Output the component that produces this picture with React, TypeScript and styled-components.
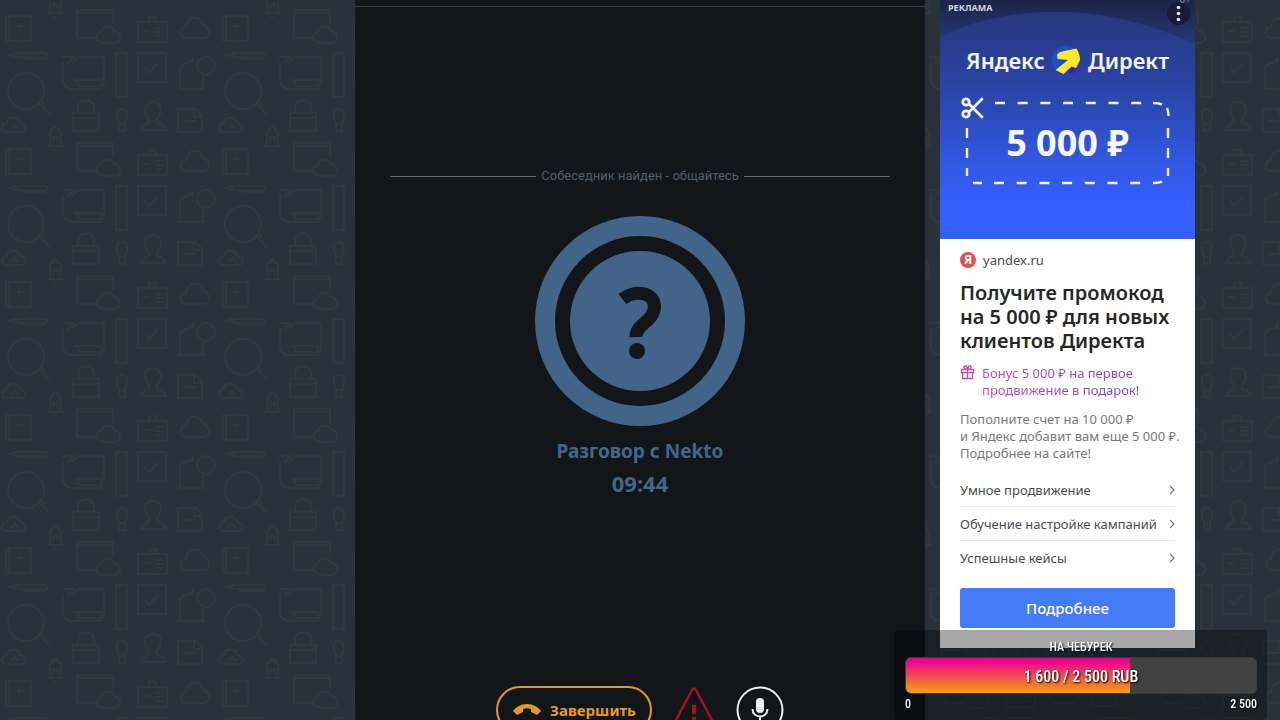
import React from "react";
import styled, { createGlobalStyle } from "styled-components";

const GlobalStyle = createGlobalStyle`
  *, *::before, *::after { box-sizing: border-box; }
  body {
    margin: 0;
    background: #29323b;
    font-family: "Noto Sans", "Open Sans", sans-serif;
  }
  h2, p, ul { margin: 0; padding: 0; }
  button { font: inherit; cursor: pointer; }
`;

const Page = styled.div`
  position: relative;
  display: grid;
  grid-template-columns: minmax(0, 1fr) minmax(0, 570px) minmax(0, 1fr);
  height: 100vh;
  overflow: hidden;
`;

const Wallpaper = styled.svg`
  position: absolute;
  inset: 0;
  width: 100%;
  height: 100%;
`;

const ChatPanel = styled.main`
  position: relative;
  grid-column: 2;
  display: flex;
  flex-direction: column;
  background: #121619;
`;

const PanelTop = styled.div`
  height: 7px;
  flex: none;
  border-bottom: 1px solid #3a4145;
`;

const Conversation = styled.section`
  display: flex;
  flex-direction: column;
  align-items: center;
  flex: none;
  height: 679px;
  padding: 158px 35px 0;
`;

const StatusLine = styled.div`
  display: flex;
  align-items: center;
  gap: 5px;
  align-self: stretch;
  color: #4f5d67;
  font-family: Roboto, "Noto Sans", sans-serif;
  font-size: 13px;
  line-height: 22px;
  white-space: nowrap;

  &::before,
  &::after {
    content: "";
    flex: 1;
    height: 1px;
    background: #65696c;
  }
`;

const Avatar = styled.svg`
  display: block;
  width: 210px;
  height: 210px;
  margin-top: 29px;
`;

const CallInfo = styled.div`
  margin-top: 9px;
  color: #43678c;
  font-weight: 700;
  line-height: 32px;
  text-align: center;
`;

const CallTitle = styled.div`
  font-size: 19px;
`;

const CallTimer = styled.div`
  font-size: 22px;
`;

const Controls = styled.div`
  display: flex;
  align-items: flex-start;
  justify-content: center;
  gap: 20px;
  flex: none;
`;

const EndButton = styled.button`
  display: flex;
  align-items: center;
  justify-content: center;
  gap: 8px;
  width: 156px;
  height: 48px;
  padding: 0;
  border: 2px solid #e39a26;
  border-radius: 24px;
  background: transparent;
  color: #e39a26;
  font-size: 15px;
  font-weight: 700;
`;

const IconButton = styled.button`
  display: flex;
  padding: 0;
  border: 0;
  background: transparent;
`;

const SideColumn = styled.aside`
  position: relative;
  grid-column: 3;
  padding-left: 15px;
`;

const AdCard = styled.article`
  width: 255px;
  height: 648px;
  background: #fff;
`;

const Cover = styled.div`
  position: relative;
  height: 239px;
  padding: 45px 26px 0;
  overflow: hidden;
  background: linear-gradient(#26377c 5%, #2b45a8 38%, #3156df 66%, #355ffb 85%);
  color: #f4f7ff;
`;

const CoverShade = styled.svg`
  position: absolute;
  inset: 0 0 auto;
  width: 100%;
  height: 80px;
`;

const AdLabel = styled.span`
  position: absolute;
  top: 2px;
  left: 8px;
  color: #cfd3e0;
  font-size: 9px;
  font-weight: 700;
  line-height: 12px;
`;

const AgeMark = styled.span`
  position: absolute;
  top: -8px;
  right: 4px;
  color: #8a8fa3;
  font-size: 10px;
  line-height: 14px;
`;

const MenuButton = styled.button`
  position: absolute;
  top: 2px;
  right: 5px;
  display: grid;
  place-items: center;
  width: 23px;
  height: 23px;
  padding: 0;
  border: 0;
  border-radius: 50%;
  background: #171d38;
`;

const Brand = styled.div`
  position: relative;
  display: flex;
  align-items: center;
  justify-content: space-between;
  font-size: 22px;
  font-weight: 600;
  line-height: 30px;
`;

const Coupon = styled.div`
  position: relative;
  display: grid;
  place-items: center;
  height: 84px;
  margin-top: 26px;
  font-size: 36px;
  font-weight: 700;
  line-height: 40px;
`;

const CouponOutline = styled.svg`
  position: absolute;
  top: -4px;
  left: -6px;
  width: 212px;
  height: 90px;
`;

const AdBody = styled.div`
  padding: 10px 20px 0;
  color: #4b4b4d;
  font-size: 13px;
`;

const Source = styled.a`
  display: flex;
  align-items: center;
  gap: 7px;
  color: #4b4b4d;
  line-height: 22px;
  text-decoration: none;
`;

const SourceMark = styled.span`
  display: grid;
  place-items: center;
  width: 16px;
  height: 16px;
  border-radius: 50%;
  background: #e0524f;
  color: #fff;
  font-size: 12px;
  font-weight: 700;
  line-height: 16px;
`;

const AdTitle = styled.h2`
  margin-top: 10px;
  color: #262628;
  font-size: 20px;
  font-weight: 600;
  line-height: 24px;
  white-space: nowrap;
`;

const Bonus = styled.div`
  display: flex;
  align-items: flex-start;
  gap: 7px;
  margin-top: 12px;
  line-height: 17px;
  white-space: nowrap;
`;

const BonusText = styled.p`
  background: linear-gradient(90deg, #cb45a4, #7a45d2);
  background-clip: text;
  color: transparent;
`;

const Description = styled.p`
  margin-top: 12px;
  color: #77777a;
  line-height: 17px;
  white-space: nowrap;
`;

const LinkList = styled.ul`
  margin-top: 11px;
  list-style: none;
`;

const LinkItem = styled.li`
  & + & {
    border-top: 1px solid #e9e9ea;
  }
`;

const SiteLink = styled.a`
  display: flex;
  align-items: center;
  justify-content: space-between;
  height: 33px;
  color: #4b4b4d;
  text-decoration: none;
  white-space: nowrap;
`;

const MoreButton = styled.button`
  width: 100%;
  height: 40px;
  margin-top: 14px;
  padding: 0;
  border: 0;
  border-radius: 3px;
  background: #437bf8;
  color: #fff;
  font-size: 15px;
  font-weight: 500;
`;

const Goal = styled.section`
  position: fixed;
  right: 13px;
  bottom: 0;
  width: 373px;
  height: 90px;
  padding: 7px 10px 0 11px;
  border-radius: 4px;
  background: rgba(0, 0, 0, 0.34);
  color: #fff;
  font-family: "Roboto Condensed", "Liberation Sans Narrow", Roboto, sans-serif;
  font-weight: 500;
  text-shadow: 1px 1px 2px #000;
`;

const GoalTitle = styled.div`
  font-size: 12px;
  line-height: 20px;
  text-align: center;
`;

const GoalBar = styled.div`
  position: relative;
  height: 37px;
  border: 1px solid #3b3b3b;
  border-radius: 6px;
  overflow: hidden;
  background: #424242;
`;

const GoalFill = styled.div`
  height: 100%;
  background: linear-gradient(#ee0094 8%, #f59a14 96%);
`;

const GoalValue = styled.div`
  position: absolute;
  inset: 0;
  font-size: 16px;
  line-height: 37px;
  text-align: center;
`;

const GoalScale = styled.div`
  display: flex;
  justify-content: space-between;
  font-size: 12px;
  line-height: 20px;
`;

const links = ["Умное продвижение", "Обучение настройке кампаний", "Успешные кейсы"];
const goal = { current: 1600, target: 2500 };
const format = (n: number) => String(n).replace(/(\d)(?=(\d{3})+$)/g, "$1 ");

function Background() {
  return (
    <Wallpaper aria-hidden="true">
      <defs>
        <pattern id="office" width="217" height="133" patternUnits="userSpaceOnUse">
          <g fill="none" stroke="#35443f" strokeWidth="1.4" strokeOpacity="0.5" strokeLinejoin="round">
            <path d="M6 16h25v25H6zM9 16v25M19 23v6M15 26h9" />
            <path d="M77 38V10h36v14M77 13h36M77 38h20" />
            <path d="M101 42c-6-1-6-9 0-10c2-7 11-7 13-1c8 1 8 11 1 12h-11z" />
            <path d="M138 22h29v20h-29zM149 22v-5h7v5M143 31h7M155 28h8M155 32h8M155 36h8" />
            <path d="M186 38c-7-1-7-10 0-11c1-12 15-12 17-2c8 2 8 12 1 13z" />
            <path d="M8 55l8-2h29l3 2-3 4H28zM16 53v4h29" />
            <circle cx="26" cy="91" r="18" />
            <path d="M39 103l11 11M41 101l4 4" />
            <path d="M62 57h12l-7 7M72 63l6-6h26v26l-3 6H70c-6-2-8-7-7-13V62M77 80h24v6H79zM74 80h6" />
            <path d="M116 53h11v44h-11z" />
            <path d="M138 53h28v29h-28zM145 68l4 5 9-10" />
            <path d="M180 89V67c2-3 6-4 10-5l3-4v5M178 89h27M203 76v13" />
            <circle cx="206" cy="66" r="9" />
            <path d="M73 113h26v18H73zM78 113v-6c0-9 16-9 16 0v6M73 118h26" />
            <path d="M119 123c-3-5-4-13 2-14s8 7 4 14v8h-6zM119 124h6" />
            <path d="M149 119c-6-7-5-17 4-17s10 10 4 17v4c4 1 8 2 9 7h-25c1-5 5-6 8-7z" />
            <path d="M178 109h18l6 7v16h-24zM194 109v8h8M183 121h13" />
            <path d="M5 132c-5-2-3-9 2-9c1-7 12-7 13 0c7 1 7 9 2 9zM11 129l4-4 4 4" />
            <path d="M50 13V1c1-4 3-6 5-7c3 2 5 4 6 7v12M53 10V4h5v6M47 13h17M53 17h4" />
            <path d="M50 134c1-4 3-6 5-7c3 1 5 3 6 7" />
          </g>
        </pattern>
      </defs>
      <rect width="100%" height="100%" fill="url(#office)" />
    </Wallpaper>
  );
}

function QuestionAvatar() {
  return (
    <Avatar viewBox="0 0 210 210" role="img" aria-label="Собеседник">
      <circle cx="105" cy="105" r="95" fill="none" stroke="#426488" strokeWidth="20" />
      <circle cx="105" cy="105" r="70" fill="#426488" />
      <path
        d="M87.5 83c11-9 32-8 32 8c-1 15-19 17-18.500 30"
        fill="none"
        stroke="#121619"
        strokeWidth="13"
      />
      <circle cx="102" cy="135" r="8" fill="#121619" />
    </Avatar>
  );
}

function AdCover() {
  return (
    <Cover>
      <CoverShade viewBox="0 0 255 80" preserveAspectRatio="none" aria-hidden="true">
        <defs>
          <linearGradient id="shade" x1="0" y1="0" x2="0" y2="1">
            <stop offset="0" stopColor="#1c2546" />
            <stop offset="0.4" stopColor="#202d5c" />
            <stop offset="1" stopColor="#26377c" />
          </linearGradient>
        </defs>
        <path d="M0 0H255V44C210 23 155 10 108 12C65 13 25 23 0 38z" fill="url(#shade)" />
      </CoverShade>
      <AdLabel>РЕКЛАМА</AdLabel>
      <MenuButton aria-label="Меню рекламы">
        <svg width="5" height="17" viewBox="0 0 5 17" fill="#e4e6ee">
          <circle cx="2.5" cy="2.5" r="1.8" />
          <circle cx="2.5" cy="8.5" r="1.8" />
          <circle cx="2.5" cy="14.5" r="1.8" />
        </svg>
      </MenuButton>
      <AgeMark>0+</AgeMark>
      <Brand>
        <span>Яндекс</span>
        <svg width="30" height="30" viewBox="0 0 30 30" aria-hidden="true">
          <circle cx="15" cy="15" r="14" fill="#1b50cc" />
          <path d="M16 28l5-7 5 2-3 5z" fill="#4420ad" />
          <path
            d="M6 9.500l3-2.500 16.500-3.500c2 3 3.500 7 3.500 11.500l-4 8-4.500-1.500-8 7.500-8-4 12.500-10-10.500-1z"
            fill="#fbe92b"
          />
        </svg>
        <span>Директ</span>
      </Brand>
      <Coupon>
        <CouponOutline viewBox="0 0 212 90" fill="none" stroke="#f1f5ff" aria-hidden="true">
          <path d="M35 6H185" strokeWidth="2.4" strokeDasharray="10 12.7" />
          <path d="M13 86h9M34 86H190" strokeWidth="2.4" strokeDasharray="10 12.7" />
          <path d="M193 6c4 0 6 0 9 1.500M207 11c1 2 1.500 5 1.500 8M208 31v10M208 51v10M208 71v8M193 86c4 0 6 0 9-1.500" strokeWidth="2.4" />
          <path d="M7 31v10M7 51v10M7 71v8" strokeWidth="2.4" />
          <g strokeWidth="2.8" strokeLinecap="round">
            <circle cx="6" cy="5" r="3.2" />
            <circle cx="6" cy="17" r="3.2" />
            <path d="M9 7l13 13M9 15L22 2" />
          </g>
        </CouponOutline>
        5 000 ₽
      </Coupon>
    </Cover>
  );
}

function Advert() {
  return (
    <AdCard>
      <AdCover />
      <AdBody>
        <Source href="#yandex">
          <SourceMark>Я</SourceMark>
          yandex.ru
        </Source>
        <AdTitle>
          Получите промокод
          <br />
          на 5 000 ₽ для новых
          <br />
          клиентов Директа
        </AdTitle>
        <Bonus>
          <svg width="15" height="15" viewBox="0 0 15 15" fill="none" stroke="#ca49a1" strokeWidth="1.3" aria-hidden="true">
            <path d="M1.5 4.5h12v3h-12zM2.5 7.5v6h10v-6M7.5 4.5v9M7.5 4.5C4 4.5 3 1 5 1s2.5 3.5 2.5 3.5S8 1 10 1s1 3.5-2.5 3.5" />
          </svg>
          <BonusText>
            Бонус 5 000 ₽ на первое
            <br />
            продвижение в подарок!
          </BonusText>
        </Bonus>
        <Description>
          Пополните счет на 10 000 ₽
          <br />
          и Яндекс добавит вам еще 5 000 ₽.
          <br />
          Подробнее на сайте!
        </Description>
        <LinkList>
          {links.map((label) => (
            <LinkItem key={label}>
              <SiteLink href="#more">
                {label}
                <svg width="6" height="10" viewBox="0 0 6 10" fill="none" stroke="#77777a" strokeWidth="1.2" aria-hidden="true">
                  <path d="M1 1l4 4-4 4" />
                </svg>
              </SiteLink>
            </LinkItem>
          ))}
        </LinkList>
        <MoreButton>Подробнее</MoreButton>
      </AdBody>
    </AdCard>
  );
}

export default function App() {
  return (
    <Page>
      <GlobalStyle />
      <Background />
      <ChatPanel>
        <PanelTop />
        <Conversation>
          <StatusLine>Собеседник найден - общайтесь</StatusLine>
          <QuestionAvatar />
          <CallInfo>
            <CallTitle>Разговор с Nekto</CallTitle>
            <CallTimer>09:44</CallTimer>
          </CallInfo>
        </Conversation>
        <Controls>
          <EndButton>
            <svg width="30" height="14" viewBox="0 0 30 14" fill="currentColor" aria-hidden="true">
              <path d="M1 8C4 4 9 1 15 1s11 3 14 7l-4 4-6-3V6c-3-1-5-1-8 0v3l-6 3z" />
            </svg>
            Завершить
          </EndButton>
          <IconButton aria-label="Пожаловаться">
            <svg width="44" height="44" viewBox="0 0 44 44" fill="none" stroke="#a01325" strokeWidth="2.4" strokeLinejoin="round">
              <path d="M20 4q2-3 4 0l18 34q1 3-2 3H4q-3 0-2-3z" />
              <path d="M22 19v9M22 31v4" strokeWidth="4" />
            </svg>
          </IconButton>
          <IconButton aria-label="Микрофон">
            <svg width="48" height="48" viewBox="0 0 48 48" fill="none" stroke="#efefef" strokeWidth="2">
              <circle cx="24" cy="24" r="22.5" />
              <rect x="20" y="12" width="8" height="15" rx="4" fill="#efefef" stroke="none" />
              <path d="M16.5 23c0 10 15 10 15 0M24 30v6M19 36h10" />
            </svg>
          </IconButton>
        </Controls>
      </ChatPanel>
      <SideColumn>
        <Advert />
      </SideColumn>
      <Goal>
        <GoalTitle>НА ЧЕБУРЕК</GoalTitle>
        <GoalBar
          role="progressbar"
          aria-label="На чебурек"
          aria-valuenow={goal.current}
          aria-valuemax={goal.target}
        >
          <GoalFill style={{ width: `${(goal.current / goal.target) * 100}%` }} />
          <GoalValue>
            {format(goal.current)} / {format(goal.target)} RUB
          </GoalValue>
        </GoalBar>
        <GoalScale>
          <span>0</span>
          <span>{format(goal.target)}</span>
        </GoalScale>
      </Goal>
    </Page>
  );
}
